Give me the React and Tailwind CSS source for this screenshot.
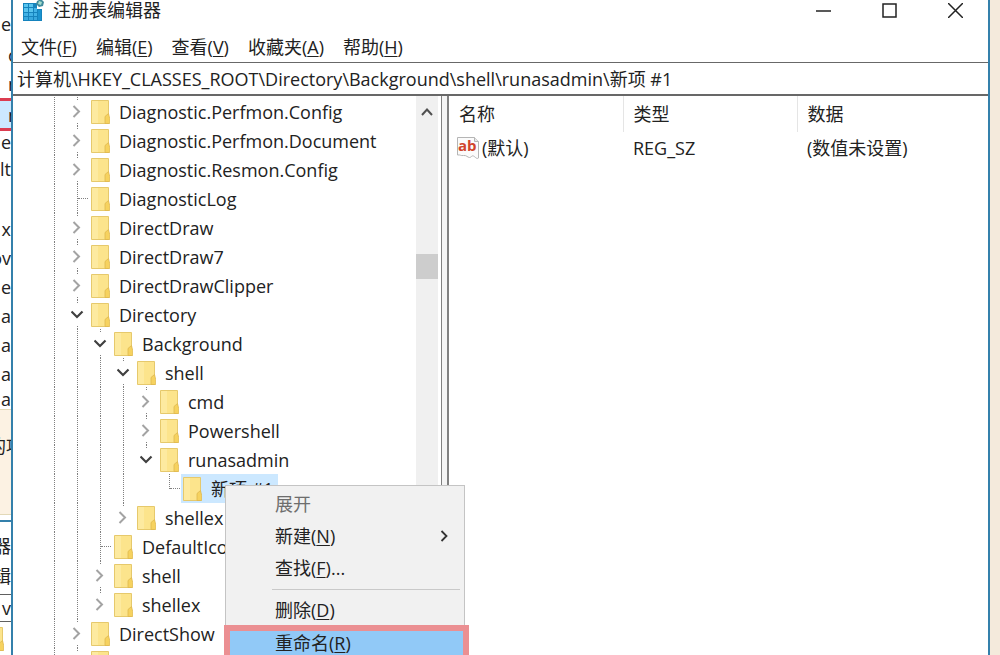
const MENUS = [
  { label: '文件', key: 'F' },
  { label: '编辑', key: 'E' },
  { label: '查看', key: 'V' },
  { label: '收藏夹', key: 'A' },
  { label: '帮助', key: 'H' },
]

// cells: '|' guide line, ' ' empty, '>' collapsed, 'v' expanded, '+' leaf, 'L' last leaf
// last: no guide continues below the expander
const ROWS = [
  { cells: '|>', name: 'Diagnostic.Perfmon.Config' },
  { cells: '|>', name: 'Diagnostic.Perfmon.Document' },
  { cells: '|>', name: 'Diagnostic.Resmon.Config' },
  { cells: '|+', name: 'DiagnosticLog' },
  { cells: '|>', name: 'DirectDraw' },
  { cells: '|>', name: 'DirectDraw7' },
  { cells: '|>', name: 'DirectDrawClipper' },
  { cells: '|v', name: 'Directory' },
  { cells: '||v', name: 'Background' },
  { cells: '|||v', name: 'shell' },
  { cells: '||||>', name: 'cmd' },
  { cells: '||||>', name: 'Powershell' },
  { cells: '||||v', name: 'runasadmin', last: true },
  { cells: '|||| L', name: '新项 #1', selected: true },
  { cells: '|||>', name: 'shellex', last: true },
  { cells: '||+', name: 'DefaultIcon' },
  { cells: '||>', name: 'shell' },
  { cells: '||>', name: 'shellex', last: true },
  { cells: '|>', name: 'DirectShow' },
  { cells: '|>', name: 'DirectXFile' },
]

function RegistryIcon() {
  return (
    <svg viewBox="0 0 22 24" className="h-6 w-[22px] shrink-0">
      <path d="M0 3h14v6h5v12H0z" fill="#1583bd" />
      <path d="M1 4h4v3H1zM6 4h4v3H6zM1 8h4v4H1zM6 8h4v4H6z" fill="#58c4ee" />
      <path d="M11 8h3v4h-3zM1 13h4v3H1zM6 13h4v3H6zM11 13h3v3h-3z" fill="#41b2e6" />
      <path d="M1 17h4v3H1zM6 17h4v3H6zM11 17h3v3h-3z" fill="#37a8de" />
      <path d="M15 10h3v10h-3z" fill="#1b93cf" />
      <path d="M14 1l4-2 3 3-1 4-4 1-3-3z" fill="#3f8a9c" />
      <path d="M16 1l3 1-1 3-3-1z" fill="#a5dccb" />
    </svg>
  )
}

function FolderIcon() {
  return (
    <svg viewBox="0 0 19 24" className="h-6 w-[19px] shrink-0">
      <path d="M.5 .5h17v23H.5z" fill="#fce48c" stroke="#e6c96c" />
      <path d="M1 1h6v22H1z" fill="#fdeaa0" />
      <path d="M14 23.500v-7l3.500-3 1.200 5v5z" fill="#f6d25f" stroke="#deb84e" strokeWidth=".8" />
    </svg>
  )
}

function StringIcon() {
  return (
    <svg viewBox="0 0 24 24" className="h-6 w-6 shrink-0">
      <path
        d="M1.500 1.500h17l4 4v16.500c-2 1.500-3-1-5-2-2-.8-2 1.500-4 1.500s-3-2.500-6-2-3-1-6-.5z"
        fill="#fbfbfb"
        stroke="#b5b5b5"
      />
      <path d="M18.500 1.500v4h4" fill="#e8e8e8" stroke="#b5b5b5" />
      <text x="2" y="15" fontSize="15" fontWeight="700" fontFamily="Open Sans, sans-serif" fill="#d1442c">
        ab
      </text>
    </svg>
  )
}

function Chevron({ open }) {
  return open ? (
    <svg viewBox="0 0 13 15" className="h-[15px] w-[13px]" fill="none" stroke="#404040" strokeWidth="2.200">
      <path d="M.5 4.500L6 10l5.500-5.500" />
    </svg>
  ) : (
    <svg viewBox="0 0 13 15" className="h-[15px] w-[13px]" fill="none" stroke="#a3a3a3" strokeWidth="2">
      <path d="M2.500 2L8 7.500 2.500 13" />
    </svg>
  )
}

function TreeCell({ type, last }) {
  if (type === ' ') return <span className="w-[23px] shrink-0" />
  if (type === '|') {
    return (
      <span className="flex w-[23px] shrink-0 justify-center">
        <span className="w-px border-l border-dotted border-[#808080]" />
      </span>
    )
  }
  if (type === '+' || type === 'L') {
    return (
      <span className="flex w-[23px] shrink-0 pl-[11px]">
        <span
          className={
            type === 'L'
              ? 'h-[15px] w-px border-l border-dotted border-[#808080]'
              : 'w-px border-l border-dotted border-[#808080]'
          }
        />
        <span className="mt-[14px] h-px w-[10px] border-t border-dotted border-[#808080]" />
      </span>
    )
  }
  return (
    <span className="flex w-[23px] shrink-0 flex-col items-center justify-between">
      <span className="h-[3px] w-px border-l border-dotted border-[#808080]" />
      <Chevron open={type === 'v'} />
      <span className={last ? 'h-[3px]' : 'h-[3px] w-px border-l border-dotted border-[#808080]'} />
    </span>
  )
}

function Tree() {
  return (
    <ul className="min-w-0 flex-1 overflow-hidden pl-[30px] pt-px">
      {ROWS.map((row, index) => (
        <li key={index} className="flex h-[29px]">
          {row.cells.split('').map((type, i) => (
            <TreeCell key={i} type={type} last={row.last} />
          ))}
          <span
            className={
              row.selected
                ? 'flex items-center gap-[9px] whitespace-nowrap bg-[#cce8ff] pl-[2px] pr-1'
                : 'flex items-center gap-[9px] whitespace-nowrap pl-[2px]'
            }
          >
            <FolderIcon />
            {row.name}
          </span>
        </li>
      ))}
    </ul>
  )
}

function Scrollbar() {
  return (
    <div className="flex w-[22px] shrink-0 flex-col bg-[#f0f0f0]">
      <button aria-label="Scroll up" className="flex h-[31px] items-center justify-center">
        <svg viewBox="0 0 12 10" className="h-[10px] w-3" fill="none" stroke="#505050" strokeWidth="2">
          <path d="M1 8l5-5.500L11 8" />
        </svg>
      </button>
      <div className="mt-[127px] h-[25px] bg-[#cdcdcd]" />
    </div>
  )
}

function Values() {
  return (
    <div className="min-w-0 flex-1">
      <table className="w-full table-fixed text-left">
        <thead>
          <tr className="h-[36px]">
            <th className="w-[174px] border-r border-[#e5e5e5] pl-[10px] font-normal">名称</th>
            <th className="w-[174px] border-r border-[#e5e5e5] pl-[10px] font-normal">类型</th>
            <th className="pl-[10px] font-normal">数据</th>
          </tr>
        </thead>
        <tbody>
          <tr className="h-[31px]">
            <td className="pl-[7px]">
              <span className="flex items-center gap-[2px]">
                <StringIcon />
                (默认)
              </span>
            </td>
            <td className="pl-[10px]">REG_SZ</td>
            <td className="pl-[10px]">(数值未设置)</td>
          </tr>
        </tbody>
      </table>
    </div>
  )
}

function MenuItem({ label, hotkey, suffix, submenu, disabled }) {
  return (
    <button
      role="menuitem"
      disabled={disabled}
      className="flex h-8 w-full items-center justify-between pl-[49px] pr-[16px] disabled:text-[#6d6d6d]"
    >
      <span>
        {label}
        {hotkey ? (
          <>
            (<u className="underline-offset-2">{hotkey}</u>)
          </>
        ) : null}
        {suffix}
      </span>
      {submenu ? (
        <svg viewBox="0 0 8 12" className="h-3 w-2" fill="none" stroke="#333" strokeWidth="1.800">
          <path d="M1.500 1l5 5-5 5" />
        </svg>
      ) : null}
    </button>
  )
}

function ContextMenu() {
  return (
    <div role="menu" className="absolute left-[225px] top-[485px] w-[240px] border border-[#c4c4c4] bg-[#f1f1f1] pt-[2px]">
      <MenuItem label="展开" disabled />
      <MenuItem label="新建" hotkey="N" submenu />
      <MenuItem label="查找" hotkey="F" suffix="..." />
      <div className="mb-1 ml-[46px] mr-1 mt-[5px] border-t border-[#c9c9c9]" />
      <MenuItem label="删除" hotkey="D" />
      <div className="-ml-[2px] -mr-[5px] -mt-px border-[6px] border-[#eb8f92] bg-[#91c9f7]">
        <button role="menuitem" className="flex h-6 w-full items-center pl-[45px]">
          <span>
            重命名(<u className="underline-offset-2">R</u>)
          </span>
        </button>
      </div>
    </div>
  )
}

// sliver of the window that sits behind the editor
function BackgroundWindow() {
  return (
    <div className="flex w-[11px] shrink-0 flex-col items-end overflow-hidden whitespace-nowrap bg-white">
      <span className="flex h-10 items-center pt-2">e</span>
      <span className="flex h-[29px] w-[3px] items-center">o</span>
      <span className="flex h-[29px] w-[3px] items-center">n</span>
      <div className="flex h-[33px] w-full items-center justify-end border-y-[3px] border-[#dc3c50] bg-[#cce8ff]">
        <span className="w-[3px]">n</span>
      </div>
      <span className="flex h-[22px] items-center">e</span>
      <span className="flex h-[61px] pt-1">lt</span>
      <span className="flex h-[29px] items-center">x</span>
      <span className="flex h-[29px] items-center">ov</span>
      <span className="flex h-[29px] items-center">le</span>
      <span className="flex h-[29px] items-center">a</span>
      <span className="flex h-[29px] items-center">a</span>
      <span className="flex h-[29px] items-center">a</span>
      <span className="flex h-[21px] items-center">a</span>
      <div className="flex h-[106px] w-full border-y border-[#e3d9b8] bg-[#fcf2e3] pt-[24px]">
        <span className="-ml-3">的项</span>
      </div>
      <div className="mt-[5px] w-full border-t-2 border-[#3480ab]" />
      <span className="flex h-9 items-center pt-3">器</span>
      <span className="flex h-9 items-center">编辑</span>
      <span className="flex h-[28px] w-full items-center justify-end border-y border-[#606060]">v</span>
      <div className="mt-[5px] flex w-full justify-end pr-[7px]">
        <FolderIcon />
      </div>
    </div>
  )
}

export default function App() {
  return (
    <div className="relative flex h-screen overflow-hidden bg-[#f4eadc] font-['Open_Sans','Noto_Sans_CJK_SC',sans-serif] text-[18px] leading-6 text-[#222]">
      <BackgroundWindow />
      <main className="flex min-w-0 flex-1 flex-col border-x-2 border-[#3480ab] bg-white">
        <header className="flex h-8 items-start justify-between pl-[10px]">
          <div className="flex items-start gap-2">
            <RegistryIcon />
            <h1 className="-mt-[2px]">注册表编辑器</h1>
          </div>
          <div className="flex h-5 items-center">
            <button aria-label="Minimize" className="flex w-[66px] justify-center">
              <svg viewBox="0 0 15 15" className="size-[15px]" stroke="#222" strokeWidth="1.500">
                <path d="M0 8h15" />
              </svg>
            </button>
            <button aria-label="Maximize" className="flex w-[66px] justify-center">
              <svg viewBox="0 0 15 15" className="size-[15px]" fill="none" stroke="#222" strokeWidth="1.500">
                <path d="M1 1h13v13H1z" />
              </svg>
            </button>
            <button aria-label="Close" className="flex w-[66px] justify-center">
              <svg viewBox="0 0 15 15" className="size-[15px]" stroke="#222" strokeWidth="1.500">
                <path d="M0 0l15 15M15 0L0 15" />
              </svg>
            </button>
          </div>
        </header>

        <nav className="flex h-[30px] items-center gap-[19px] pl-2">
          {MENUS.map((menu) => (
            <button key={menu.key}>
              {menu.label}(<u className="underline-offset-2">{menu.key}</u>)
            </button>
          ))}
        </nav>

        <input
          aria-label="Path"
          readOnly
          value="计算机\HKEY_CLASSES_ROOT\Directory\Background\shell\runasadmin\新项 #1"
          className="h-[34px] shrink-0 border-b-2 border-t border-[#686868] px-1 pb-[2px] outline-none"
        />

        <div className="flex min-h-0 flex-1">
          <div className="flex w-[429px] shrink-0 border-r border-[#808080] pr-[3px]">
            <Tree />
            <Scrollbar />
          </div>
          <div className="w-[5px] shrink-0 bg-[#f4f4f4]" />
          <div className="flex min-w-0 flex-1 border-l-2 border-[#808080]">
            <Values />
          </div>
        </div>
      </main>
      <div className="w-[10px] shrink-0" />
      <ContextMenu />
    </div>
  )
}
